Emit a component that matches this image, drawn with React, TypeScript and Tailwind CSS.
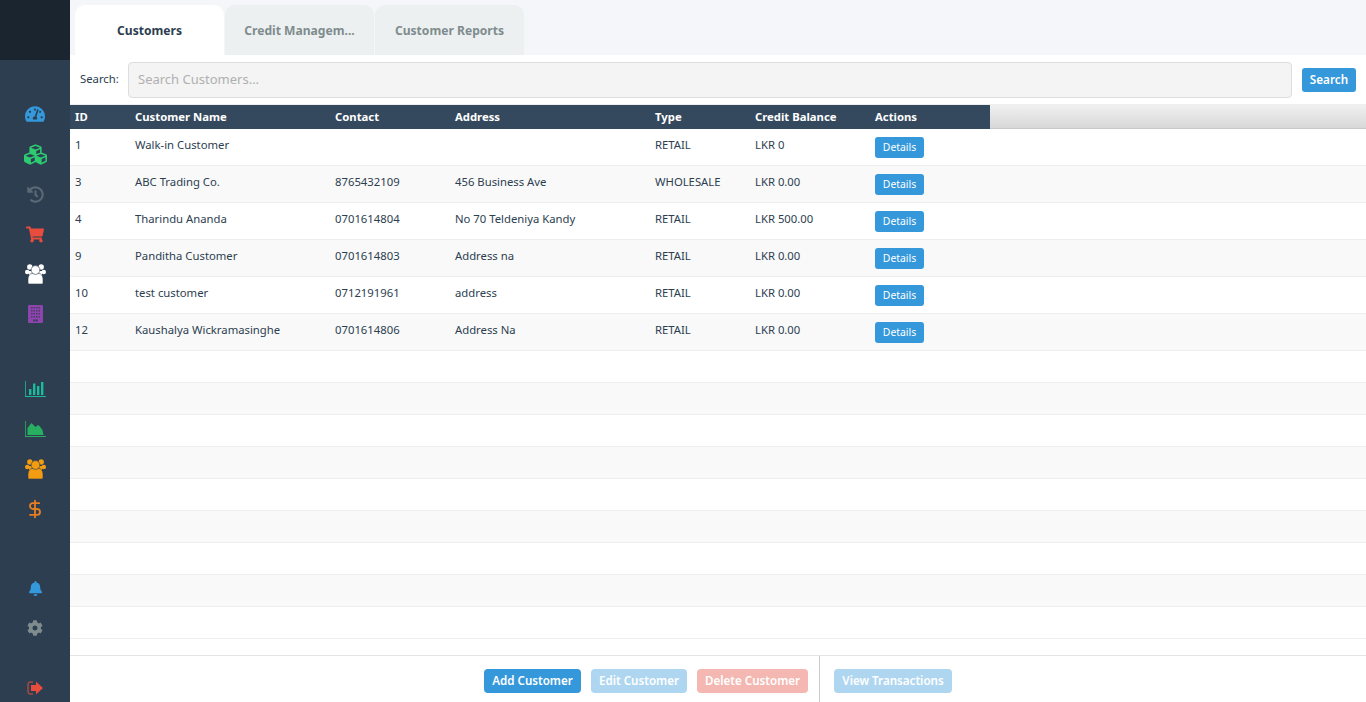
import { FaTachometerAlt, FaCubes, FaHistory, FaShoppingCart, FaBell, FaCog } from "react-icons/fa";
import { DollarSign } from "lucide-react";

const customers = [
  { id: "1", name: "Walk-in Customer", contact: "", address: "", type: "RETAIL", balance: "LKR 0" },
  { id: "3", name: "ABC Trading Co.", contact: "8765432109", address: "456 Business Ave", type: "WHOLESALE", balance: "LKR 0.00" },
  { id: "4", name: "Tharindu Ananda", contact: "0701614804", address: "No 70 Teldeniya Kandy", type: "RETAIL", balance: "LKR 500.00" },
  { id: "9", name: "Panditha Customer", contact: "0701614803", address: "Address na", type: "RETAIL", balance: "LKR 0.00" },
  { id: "10", name: "test customer", contact: "0712191961", address: "address", type: "RETAIL", balance: "LKR 0.00" },
  { id: "12", name: "Kaushalya Wickramasinghe", contact: "0701614806", address: "Address Na", type: "RETAIL", balance: "LKR 0.00" },
];

const emptyRows = [0, 1, 2, 3, 4, 5, 6, 7, 8];

const cols = "grid grid-cols-[60px_200px_120px_200px_100px_120px_120px]";

const GroupIcon = ({ className }: { className: string }) => (
  <svg viewBox="0 0 21 20" className={className} fill="currentColor">
    <circle cx="4.8" cy="3" r="2.7" />
    <circle cx="16.2" cy="3" r="2.7" />
    <circle cx="2.2" cy="8" r="2.2" />
    <circle cx="18.8" cy="8" r="2.2" />
    <path d="M4 7h13v5H4z" />
    <path d="M3 15c0-3 2-5.5 4-5.5h7c2 0 4 2.5 4 5.5v3.5c0 1-.5 1.5-1.500 1.500h-12C3.500 20 3 19.500 3 18.500z" stroke="#2c3e50" strokeWidth="0.6" />
    <circle cx="10.500" cy="6" r="4.400" stroke="#2c3e50" strokeWidth="0.6" />
  </svg>
);

const BuildingIcon = ({ className }: { className: string }) => (
  <svg viewBox="0 0 15 18" className={className}>
    <path fill="currentColor" d="M1 0h13a1 1 0 0 1 1 1v16a1 1 0 0 1-1 1H1a1 1 0 0 1-1-1V1a1 1 0 0 1 1-1z" />
    <g fill="#2c3e50" fillOpacity="0.75">
      <rect x="3" y="2" width="1.5" height="1.5" /><rect x="5.5" y="2" width="1.5" height="1.5" /><rect x="8" y="2" width="1.5" height="1.5" /><rect x="10.5" y="2" width="1.5" height="1.5" />
      <rect x="3" y="5" width="1.5" height="1.5" /><rect x="5.5" y="5" width="1.5" height="1.5" /><rect x="8" y="5" width="1.5" height="1.5" /><rect x="10.5" y="5" width="1.5" height="1.5" />
      <rect x="3" y="8" width="1.5" height="1.5" /><rect x="5.5" y="8" width="1.5" height="1.5" /><rect x="8" y="8" width="1.5" height="1.5" /><rect x="10.5" y="8" width="1.5" height="1.5" />
      <rect x="3" y="11" width="1.5" height="1.5" /><rect x="5.5" y="11" width="1.5" height="1.5" /><rect x="8" y="11" width="1.5" height="1.5" /><rect x="10.5" y="11" width="1.5" height="1.5" />
      <rect x="5" y="14.5" width="5" height="2" />
    </g>
  </svg>
);

const BarsIcon = ({ className }: { className: string }) => (
  <svg viewBox="0 0 21 16" className={className} fill="currentColor">
    <path d="M0 0h.8v15h20v1H0z" />
    <rect x="4" y="8" width="2.400" height="6" />
    <rect x="8" y="2.500" width="2.400" height="11.500" />
    <rect x="12" y="5" width="2.400" height="9" />
    <rect x="16" y="1" width="2.400" height="13" />
  </svg>
);

const AreaIcon = ({ className }: { className: string }) => (
  <svg viewBox="0 0 21 16" className={className} fill="currentColor">
    <path d="M0 0h.8v15h20v1H0z" />
    <path d="M2.500 14V7l4-5 4 4 2.500-2 1.500 1 3 4 1 5z" />
  </svg>
);

const ExitIcon = ({ className }: { className: string }) => (
  <svg viewBox="0 0 16 14" className={className}>
    <path d="M6 1H3a2 2 0 0 0-2 2v8a2 2 0 0 0 2 2h3" fill="none" stroke="currentColor" strokeWidth="1" />
    <path d="M9 0.500 16 7l-7 6.500V10H4V4h5z" fill="currentColor" />
  </svg>
);

const App = () => {
  return (
    <div className="flex h-[702px] w-[1366px] overflow-hidden bg-white font-['Noto_Sans','Liberation_Sans',sans-serif] text-[11.3px] text-[#2c3e50]">
      <aside className="flex w-[70px] shrink-0 flex-col bg-[#2c3e50]">
        <div className="h-[60px] shrink-0 bg-[#1a252f]" />
        <div className="flex flex-col items-center pt-[34px]">
          <div className="flex h-[40px] items-center"><FaTachometerAlt className="h-[20px] w-[20px] text-[#3498db]" /></div>
          <div className="flex h-[40px] items-center"><FaCubes className="h-[23px] w-[23px] text-[#2ecc71]" /></div>
          <div className="flex h-[40px] items-center"><FaHistory className="h-[17px] w-[17px] text-[#5b6875]" /></div>
          <div className="flex h-[40px] items-center"><FaShoppingCart className="h-[17px] w-[18px] text-[#e74c3c]" /></div>
          <div className="flex h-[40px] items-center"><GroupIcon className="h-[20px] w-[21px] text-white" /></div>
          <div className="flex h-[40px] items-center"><BuildingIcon className="h-[18px] w-[15px] text-[#8e44ad]" /></div>
        </div>
        <div className="flex flex-col items-center pt-[35px]">
          <div className="flex h-[40px] items-center"><BarsIcon className="h-[16px] w-[21px] text-[#1abc9c]" /></div>
          <div className="flex h-[40px] items-center"><AreaIcon className="h-[16px] w-[21px] text-[#27ae60]" /></div>
          <div className="flex h-[40px] items-center"><GroupIcon className="h-[20px] w-[21px] text-[#f39c12]" /></div>
          <div className="flex h-[40px] items-center"><DollarSign className="h-[20px] w-[20px] text-[#e67e22]" strokeWidth={2.2} /></div>
        </div>
        <div className="flex flex-col items-center pt-[39px]">
          <div className="flex h-[40px] items-center"><FaBell className="h-[15px] w-[15px] text-[#3498db]" /></div>
          <div className="flex h-[40px] items-center"><FaCog className="h-[16px] w-[16px] text-[#7f8c8d]" /></div>
        </div>
        <div className="flex flex-col items-center pt-[20px]">
          <div className="flex h-[40px] items-center"><ExitIcon className="h-[14px] w-[16px] text-[#e74c3c]" /></div>
        </div>
      </aside>

      <main className="flex min-w-0 flex-1 flex-col">
        <div className="flex h-[55px] shrink-0 gap-px bg-[#f4f6f9] pl-[5px] pt-[5px]">
          <div className="flex w-[149px] items-center justify-center rounded-t-[10px] bg-white pt-[2px] text-[12.1px] font-bold text-[#2c3e50]">Customers</div>
          <div className="flex w-[149px] items-center justify-center rounded-t-[10px] bg-[#ecf0f1] pt-[2px] text-[12.1px] font-bold text-[#7f8c8d]">Credit Managem...</div>
          <div className="flex w-[149px] items-center justify-center rounded-t-[10px] bg-[#ecf0f1] pt-[2px] text-[12.1px] font-bold text-[#7f8c8d]">Customer Reports</div>
        </div>

        <div className="flex h-[50px] shrink-0 items-center border-b border-[#eeeeee] pl-[10px] pr-[10px]">
          <span className="w-[48px] shrink-0">Search:</span>
          <div className="flex h-[36px] flex-1 items-center rounded-[4px] border border-[#dddddd] bg-[#f4f4f4] px-[9px] pt-[1px] text-[13px] text-[#b0b0b0]">Search Customers...</div>
          <button className="ml-[10px] h-[24px] w-[54px] rounded-[3px] bg-[#3498db] text-[11.7px] font-semibold text-white">Search</button>
        </div>

        <div className="flex h-[24px] shrink-0">
          <div className={`${cols} w-[920px] bg-[#34495e] text-[11.3px] font-bold leading-[24px] text-white`}>
            <div className="px-[5px]">ID</div>
            <div className="px-[5px]">Customer Name</div>
            <div className="px-[5px]">Contact</div>
            <div className="px-[5px]">Address</div>
            <div className="px-[5px]">Type</div>
            <div className="px-[5px]">Credit Balance</div>
            <div className="px-[5px]">Actions</div>
          </div>
          <div className="flex-1 border-b border-[#c8c8c8] bg-gradient-to-b from-[#f0f0f0] to-[#d8d8d8]" />
        </div>

        <div className="min-h-0 flex-1 overflow-hidden">
          {customers.map((c, i) => (
            <div key={c.id} className={`${cols} h-[37px] border-b border-[#eeeeee] pt-[8px] leading-[16px] ${i % 2 === 1 ? "bg-[#f9f9f9]" : "bg-white"}`}>
              <div className="px-[5px]">{c.id}</div>
              <div className="px-[5px]">{c.name}</div>
              <div className="px-[5px]">{c.contact}</div>
              <div className="px-[5px]">{c.address}</div>
              <div className="px-[5px]">{c.type}</div>
              <div className="px-[5px]">{c.balance}</div>
              <div className="px-[5px]">
                <button className="h-[21px] w-[49px] rounded-[3px] bg-[#3498db] pb-[1px] text-[10.4px] text-white">Details</button>
              </div>
            </div>
          ))}
          {emptyRows.map((r) => (
            <div key={r} className={`h-[32px] border-b border-[#eeeeee] ${r % 2 === 1 ? "bg-[#f9f9f9]" : "bg-white"}`} />
          ))}
        </div>

        <div className="flex h-[47px] shrink-0 justify-center border-t border-[#e5e5e5] bg-white">
          <div className="flex items-center gap-[10px] pr-[11px] pt-[4px]">
            <button className="h-[24px] w-[97px] rounded-[4px] bg-[#3498db] text-[11.6px] font-semibold text-white">Add Customer</button>
            <button className="h-[24px] w-[96px] rounded-[4px] bg-[#aed6f1] text-[11.6px] font-semibold text-white">Edit Customer</button>
            <button className="h-[24px] w-[111px] rounded-[4px] bg-[#f5b7b1] text-[11.6px] font-semibold text-white">Delete Customer</button>
          </div>
          <div className="flex items-center border-l border-[#cccccc] pl-[14px] pt-[4px]">
            <button className="h-[24px] w-[118px] rounded-[4px] bg-[#aed6f1] text-[11.6px] font-semibold text-white">View Transactions</button>
          </div>
        </div>
      </main>
    </div>
  );
};

export default App;
